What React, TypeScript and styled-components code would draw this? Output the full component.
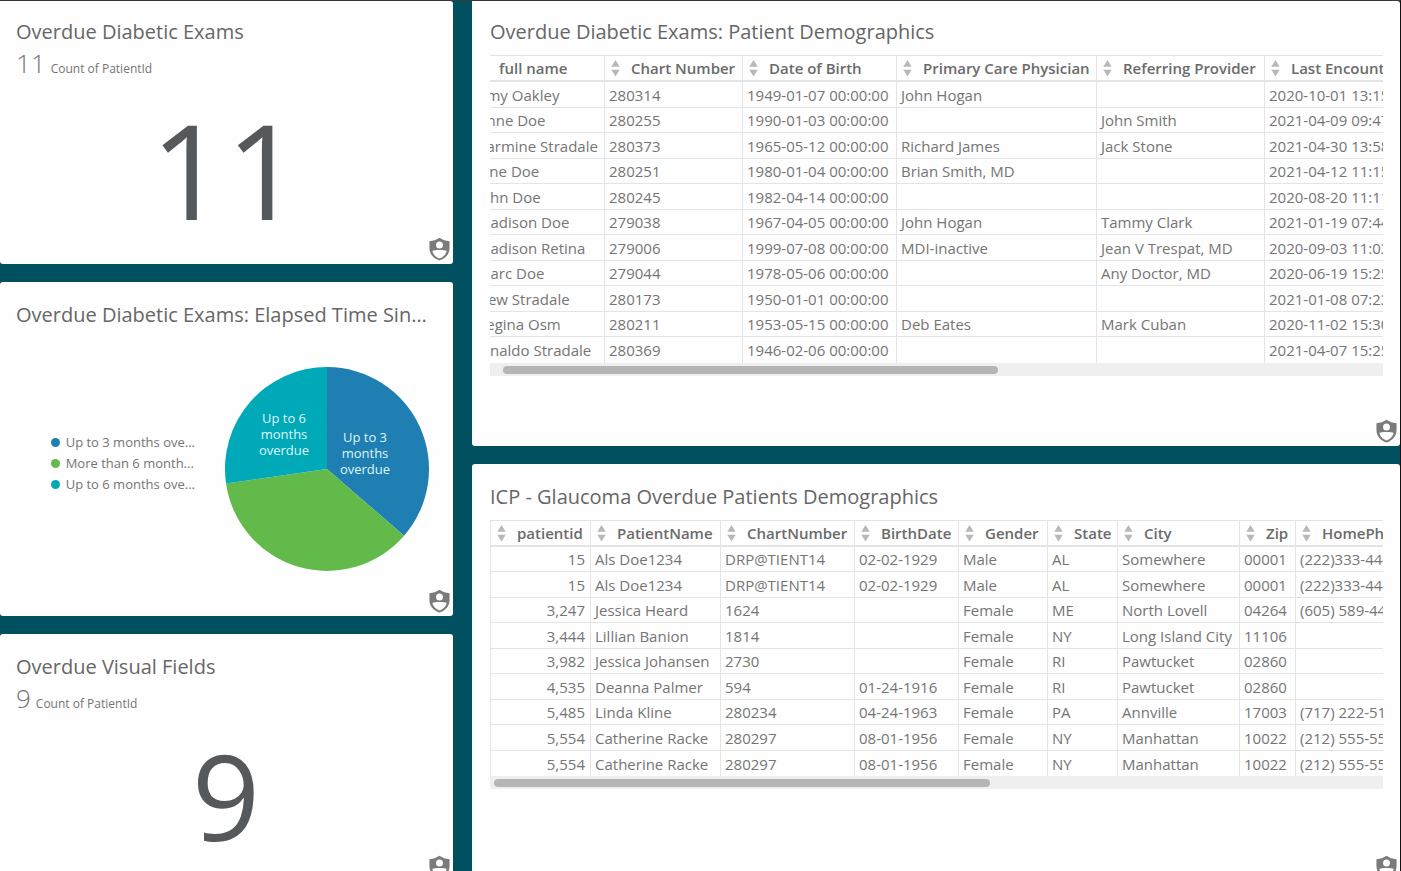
import React, { useLayoutEffect, useRef } from 'react';
import styled, { createGlobalStyle } from 'styled-components';

const GlobalStyle = createGlobalStyle`
  * { box-sizing: border-box; }
  body {
    margin: 0;
    background: #00505f;
    color: #757575;
    font-family: "Open Sans", "Noto Sans", sans-serif;
    font-size: 15px;
  }
`;

const Dashboard = styled.main`
  display: grid;
  grid-template-columns: minmax(0, 453fr) minmax(0, 928fr);
  gap: 19px;
  height: 100vh;
  overflow: hidden;
  border-top: 1px solid #3b373d;
  border-right: 1px solid #111;
`;

const Column = styled.div`
  display: flex;
  flex-direction: column;
  gap: 18px;
`;

const Card = styled.section<{ $height: number; $inset: number }>`
  position: relative;
  display: flex;
  flex: none;
  flex-direction: column;
  height: ${(p) => p.$height}px;
  padding: 19px 17px 0 ${(p) => p.$inset}px;
  border-radius: 3px;
  background: #fefefe;

  &:first-child {
    padding-top: 17px;
    border-top-left-radius: 0;
  }
`;

const Title = styled.h2`
  margin: 0;
  overflow: hidden;
  color: #666;
  font-size: 20px;
  font-weight: 400;
  line-height: 28px;
  text-overflow: ellipsis;
  white-space: nowrap;
`;

const Measure = styled.p`
  display: flex;
  align-items: baseline;
  gap: 5px;
  margin: 0;
  font-size: 12px;
  line-height: 34px;
`;

const MeasureValue = styled.span`
  font-size: 26px;
  font-weight: 300;
`;

const BigNumber = styled.div<{ $size: number }>`
  display: flex;
  flex: 1;
  align-items: center;
  justify-content: center;
  padding-bottom: 12px;
  color: #55595b;
  font-size: ${(p) => p.$size}px;
  line-height: 1;
`;

const Badge = styled.svg`
  position: absolute;
  right: 2px;
  bottom: 3px;
  width: 23px;
  height: 24px;
`;

const ChartArea = styled.div`
  display: flex;
  flex: 1;
  align-items: center;
  justify-content: flex-end;
  gap: 30px;
  padding: 0 7px 8px 0;
`;

const Legend = styled.ul`
  margin: 0;
  padding: 0 0 10px;
  font-size: 13px;
  line-height: 21px;
  list-style: none;
`;

const LegendItem = styled.li<{ $color: string }>`
  display: flex;
  align-items: center;
  gap: 6px;
  white-space: nowrap;

  &::before {
    content: "";
    width: 9px;
    height: 9px;
    border-radius: 50%;
    background: ${(p) => p.$color};
  }
`;

const Pie = styled.svg`
  flex: none;
  width: 204px;
  height: 204px;
`;

const PieLabel = styled.text`
  fill: #dff5f8;
  font-size: 13px;
  text-anchor: middle;
`;

const TableBlock = styled.div`
  margin-top: 9px;
`;

const TableViewport = styled.div`
  overflow: hidden;
`;

const Table = styled.table<{ $width: number; $framed?: boolean }>`
  width: ${(p) => p.$width}px;
  border-spacing: 0;
  border-left: ${(p) => (p.$framed ? '1px solid #e4e4e4' : '0')};
  table-layout: fixed;
`;

const HeadCell = styled.th<{ $width: number }>`
  width: ${(p) => p.$width}px;
  height: 27px;
  padding: 0;
  border: solid #e4e4e4;
  border-width: 1px 1px 2px 0;
  color: #6b6b6b;
  font-weight: 600;
  line-height: 24px;
  text-align: left;
`;

const SortButton = styled.button`
  display: flex;
  align-items: center;
  gap: 11px;
  width: 100%;
  padding: 0 0 0 6px;
  border: 0;
  background: none;
  color: inherit;
  font: inherit;
  white-space: nowrap;
`;

const SortGlyph = styled.svg`
  flex: none;
  width: 9px;
  height: 18px;
  fill: #b8b8b8;
`;

const Row = styled.tr<{ $tall: boolean }>`
  height: ${(p) => (p.$tall ? 26 : 25)}px;
`;

const Cell = styled.td<{ $numeric?: boolean }>`
  padding: 0 5px 0 4px;
  overflow: hidden;
  border: solid #e4e4e4;
  border-width: 0 1px 1px 0;
  line-height: 24px;
  text-align: ${(p) => (p.$numeric ? 'right' : 'left')};
  white-space: nowrap;

  tr:last-child > & {
    border-bottom: 0;
  }
`;

const ScrollTrack = styled.div`
  height: 13px;
  padding: 3px 4px 0;
  background: #efefef;
`;

const ScrollThumb = styled.div<{ $start: number }>`
  width: 56%;
  height: 8px;
  margin-left: ${(p) => p.$start}%;
  border-radius: 4px;
  background: #b5b5b5;
`;

type ColumnDef = { label: string; width: number; numeric?: boolean };

const overdueColumns: ColumnDef[] = [
  { label: 'full name', width: 132 },
  { label: 'Chart Number', width: 138 },
  { label: 'Date of Birth', width: 154 },
  { label: 'Primary Care Physician', width: 200 },
  { label: 'Referring Provider', width: 168 },
  { label: 'Last Encounter Date', width: 188 },
];

const overdueRows = [
  ['Amy Oakley', '280314', '1949-01-07 00:00:00', 'John Hogan', '', '2020-10-01 13:15:00'],
  ['Anne Doe', '280255', '1990-01-03 00:00:00', '', 'John Smith', '2021-04-09 09:47:00'],
  ['Carmine Stradale', '280373', '1965-05-12 00:00:00', 'Richard James', 'Jack Stone', '2021-04-30 13:58:00'],
  ['Jane Doe', '280251', '1980-01-04 00:00:00', 'Brian Smith, MD', '', '2021-04-12 11:15:00'],
  ['John Doe', '280245', '1982-04-14 00:00:00', '', '', '2020-08-20 11:11:00'],
  ['Madison Doe', '279038', '1967-04-05 00:00:00', 'John Hogan', 'Tammy Clark', '2021-01-19 07:44:00'],
  ['Madison Retina', '279006', '1999-07-08 00:00:00', 'MDI-inactive', 'Jean V Trespat, MD', '2020-09-03 11:03:00'],
  ['Marc Doe', '279044', '1978-05-06 00:00:00', '', 'Any Doctor, MD', '2020-06-19 15:25:00'],
  ['Dew Stradale', '280173', '1950-01-01 00:00:00', '', '', '2021-01-08 07:23:00'],
  ['Regina Osm', '280211', '1953-05-15 00:00:00', 'Deb Eates', 'Mark Cuban', '2020-11-02 15:30:00'],
  ['Rinaldo Stradale', '280369', '1946-02-06 00:00:00', '', '', '2021-04-07 15:25:00'],
];

const glaucomaColumns: ColumnDef[] = [
  { label: 'patientid', width: 100, numeric: true },
  { label: 'PatientName', width: 130 },
  { label: 'ChartNumber', width: 134 },
  { label: 'BirthDate', width: 104 },
  { label: 'Gender', width: 89 },
  { label: 'State', width: 70 },
  { label: 'City', width: 122 },
  { label: 'Zip', width: 56 },
  { label: 'HomePhone', width: 140 },
];

const glaucomaRows = [
  ['15', 'Als Doe1234', 'DRP@TIENT14', '02-02-1929', 'Male', 'AL', 'Somewhere', '00001', '(222)333-4444'],
  ['15', 'Als Doe1234', 'DRP@TIENT14', '02-02-1929', 'Male', 'AL', 'Somewhere', '00001', '(222)333-4444'],
  ['3,247', 'Jessica Heard', '1624', '', 'Female', 'ME', 'North Lovell', '04264', '(605) 589-4444'],
  ['3,444', 'Lillian Banion', '1814', '', 'Female', 'NY', 'Long Island City', '11106', ''],
  ['3,982', 'Jessica Johansen', '2730', '', 'Female', 'RI', 'Pawtucket', '02860', ''],
  ['4,535', 'Deanna Palmer', '594', '01-24-1916', 'Female', 'RI', 'Pawtucket', '02860', ''],
  ['5,485', 'Linda Kline', '280234', '04-24-1963', 'Female', 'PA', 'Annville', '17003', '(717) 222-5100'],
  ['5,554', 'Catherine Racke', '280297', '08-01-1956', 'Female', 'NY', 'Manhattan', '10022', '(212) 555-5555'],
  ['5,554', 'Catherine Racke', '280297', '08-01-1956', 'Female', 'NY', 'Manhattan', '10022', '(212) 555-5555'],
];

function ShieldBadge() {
  return (
    <Badge viewBox="0 0 24 24" preserveAspectRatio="none" aria-hidden="true">
      <path d="M12 0.800 C15 2.800 18.500 4 22.500 4.300 V11 C22.500 17 18.500 21.500 12 23.500 C5.500 21.500 1.500 17 1.500 11 V4.300 C5.500 4 9 2.800 12 0.800 Z" fill="#7b7b7b" />
      <circle cx="12" cy="8" r="3.600" fill="#fefefe" />
      <path d="M4.500 14 C7 12.600 17 12.600 19.500 14 C18.300 18 15.800 20.200 12 21.500 C8.200 20.200 5.700 18 4.500 14 Z" fill="#fefefe" />
    </Badge>
  );
}

type DataTableProps = {
  columns: ColumnDef[];
  rows: string[][];
  firstTall: boolean;
  framed?: boolean;
  scrolled?: number;
  thumbStart: number;
};

function DataTable({ columns, rows, firstTall, framed, scrolled = 0, thumbStart }: DataTableProps) {
  const viewport = useRef<HTMLDivElement>(null);
  useLayoutEffect(() => {
    if (viewport.current) viewport.current.scrollLeft = scrolled;
  }, [scrolled]);

  const total = columns.reduce((sum, c) => sum + c.width, framed ? 1 : 0);

  return (
    <TableBlock>
      <TableViewport ref={viewport}>
        <Table $width={total} $framed={framed}>
          <thead>
            <tr>
              {columns.map((c) => (
                <HeadCell key={c.label} $width={c.width} scope="col">
                  <SortButton type="button">
                    <SortGlyph viewBox="0 0 9 18" aria-hidden="true">
                      <path d="M4.500 1 L8.700 7.800 H0.300 Z M4.500 17.500 L0.300 10.700 H8.700 Z" />
                    </SortGlyph>
                    {c.label}
                  </SortButton>
                </HeadCell>
              ))}
            </tr>
          </thead>
          <tbody>
            {rows.map((row, r) => (
              <Row key={r} $tall={(r % 2 === 0) === firstTall}>
                {row.map((value, c) => (
                  <Cell key={c} $numeric={columns[c].numeric}>{value}</Cell>
                ))}
              </Row>
            ))}
          </tbody>
        </Table>
      </TableViewport>
      <ScrollTrack>
        <ScrollThumb $start={thumbStart} />
      </ScrollTrack>
    </TableBlock>
  );
}

const slices = [
  { label: 'Up to 3 months ove...', lines: ['Up to 3', 'months', 'overdue'], count: 4, color: '#1f7fb2', x: 140, y: 75 },
  { label: 'More than 6 month...', lines: [], count: 4, color: '#62ba4b', x: 0, y: 0 },
  { label: 'Up to 6 months ove...', lines: ['Up to 6', 'months', 'overdue'], count: 3, color: '#00a9b7', x: 59, y: 56 },
];

function PieChart() {
  const total = slices.reduce((sum, s) => sum + s.count, 0);
  const point = (n: number) => {
    const angle = (n / total) * Math.PI * 2;
    return `${102 + 102 * Math.sin(angle)} ${102 - 102 * Math.cos(angle)}`;
  };
  let start = 0;
  return (
    <Pie viewBox="0 0 204 204" role="img" aria-label="Elapsed time since overdue exam">
      {slices.map((s) => {
        const from = start;
        start += s.count;
        return <path key={s.label} fill={s.color} d={`M102 102 L${point(from)} A102 102 0 0 1 ${point(start)} Z`} />;
      })}
      {slices.flatMap((s) =>
        s.lines.map((line, i) => (
          <PieLabel key={s.label + line} x={s.x} y={s.y + i * 16}>{line}</PieLabel>
        )),
      )}
    </Pie>
  );
}

export default function App() {
  return (
    <>
      <GlobalStyle />
      <Dashboard>
        <Column>
          <Card $height={263} $inset={16}>
            <Title>Overdue Diabetic Exams</Title>
            <Measure><MeasureValue>11</MeasureValue>Count of PatientId</Measure>
            <BigNumber $size={132}>11</BigNumber>
            <ShieldBadge />
          </Card>
          <Card $height={334} $inset={16}>
            <Title>Overdue Diabetic Exams: Elapsed Time Since Due Date</Title>
            <ChartArea>
              <Legend>
                {slices.map((s) => <LegendItem key={s.label} $color={s.color}>{s.label}</LegendItem>)}
              </Legend>
              <PieChart />
            </ChartArea>
            <ShieldBadge />
          </Card>
          <Card $height={248} $inset={16}>
            <Title>Overdue Visual Fields</Title>
            <Measure><MeasureValue>9</MeasureValue>Count of PatientId</Measure>
            <BigNumber $size={119}>9</BigNumber>
            <ShieldBadge />
          </Card>
        </Column>
        <Column>
          <Card $height={445} $inset={18}>
            <Title>Overdue Diabetic Exams: Patient Demographics</Title>
            <DataTable columns={overdueColumns} rows={overdueRows} firstTall scrolled={17} thumbStart={1} />
            <ShieldBadge />
          </Card>
          <Card $height={418} $inset={18}>
            <Title>ICP - Glaucoma Overdue Patients Demographics</Title>
            <DataTable columns={glaucomaColumns} rows={glaucomaRows} firstTall={false} framed thumbStart={0} />
            <ShieldBadge />
          </Card>
        </Column>
      </Dashboard>
    </>
  );
}
